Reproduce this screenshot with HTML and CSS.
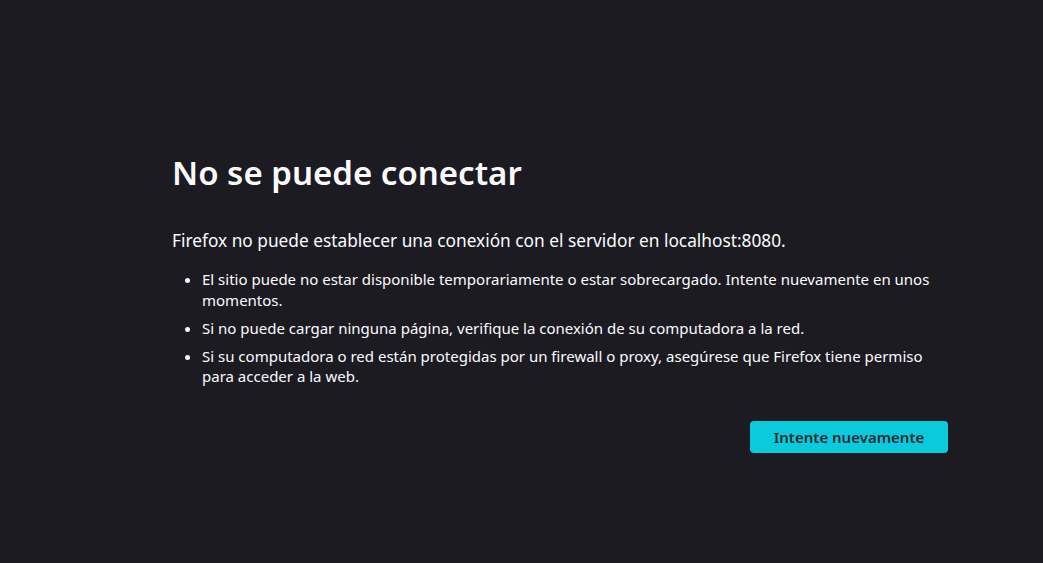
FILE: index.html
```html
<!DOCTYPE html>
<html lang="es">
<head>
<meta charset="utf-8">
<title>Problema al cargar la página</title>
<link rel="stylesheet" href="styles.css">
</head>
<body>
<main class="container">
  <h1 class="title">No se puede conectar</h1>
  <p class="intro">Firefox no puede establecer una conexión con el servidor en localhost:8080.</p>
  <ul class="advice">
    <li>El sitio puede no estar disponible temporariamente o estar sobrecargado. Intente nuevamente en unos momentos.</li>
    <li>Si no puede cargar ninguna página, verifique la conexión de su computadora a la red.</li>
    <li>Si su computadora o red están protegidas por un firewall o proxy, asegúrese que Firefox tiene permiso para acceder a la web.</li>
  </ul>
  <div class="actions">
    <button class="primary">Intente nuevamente</button>
  </div>
</main>
</body>
</html>
```

FILE: styles.css
```css
html, body {
  margin: 0;
  height: 100%;
}
body {
  background: #1c1b22;
  color: #fbfbfe;
  font-family: "Noto Sans", "DejaVu Sans", sans-serif;
  font-size: 15px;
}
.container {
  width: 776px;
  margin-left: 172px;
  padding-top: 150px;
}
.title {
  margin: 0;
  font-size: 33px;
  font-weight: 600;
  line-height: 46px;
}
.intro {
  margin: 33px 0 0;
  font-size: 17.3px;
  line-height: 24px;
}
.advice {
  margin: 16px 0 0;
  padding-left: 30px;
  line-height: 20.5px;
}
.advice li {
  margin-bottom: 7.5px;
}
.actions {
  display: flex;
  justify-content: flex-end;
  margin-top: 34px;
}
.primary {
  width: 198px;
  height: 32px;
  border: none;
  border-radius: 4px;
  background: #0bcadb;
  color: #2b2a33;
  font-family: inherit;
  font-size: 15px;
  font-weight: 600;
  padding: 0;
}
```
